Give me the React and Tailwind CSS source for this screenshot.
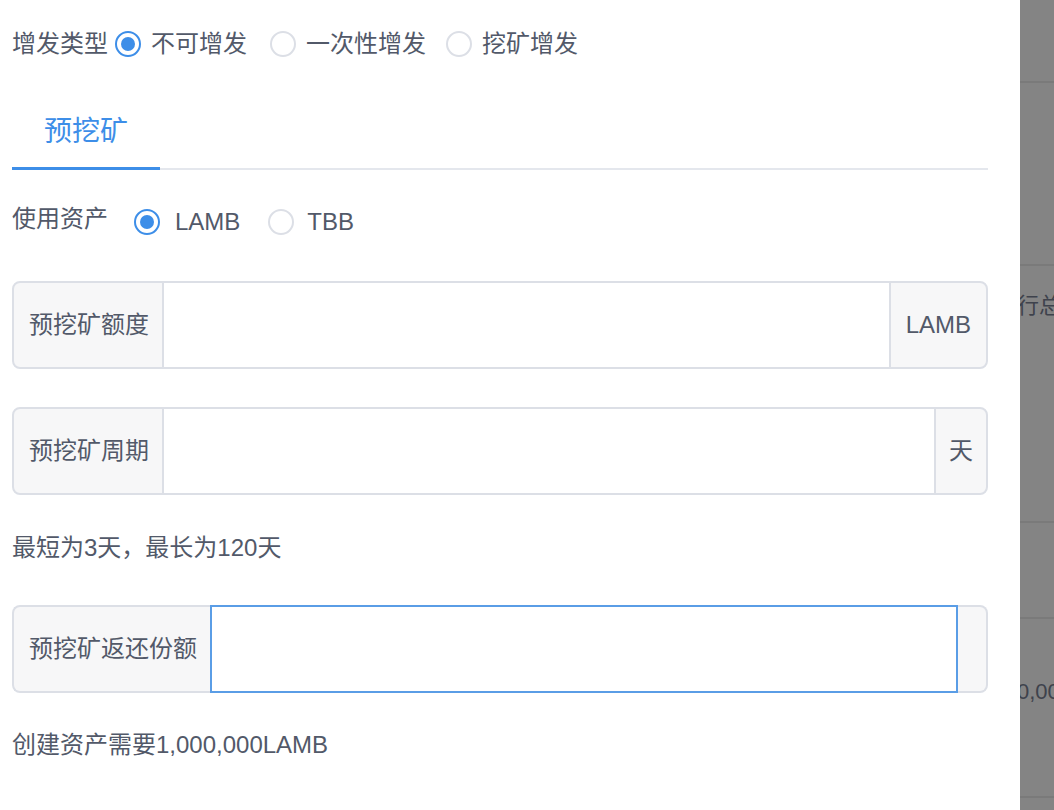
import { useState } from "react";

const font = {
  fontFamily: '"Liberation Sans", "Noto Sans CJK SC", sans-serif',
};

const Radio = ({ checked, label, onClick, className = "" }) => (
  <label
    onClick={onClick}
    className={`flex items-center cursor-pointer ${className}`}
  >
    <span
      className={`w-[26px] h-[26px] rounded-full border-2 flex items-center justify-center shrink-0 ${
        checked ? "border-[#3d8ee8]" : "border-[#dcdfe6]"
      }`}
    >
      {checked && <span className="w-[14px] h-[14px] rounded-full bg-[#3d8ee8]" />}
    </span>
    <span className="ml-[10px]">{label}</span>
  </label>
);

const InputGroup = ({ label, append, focused, appendWidth }) => (
  <div className="flex h-[88px]">
    <div
      className={`flex items-center bg-[#f7f7f8] border-2 border-[#dcdfe6] rounded-l-[8px] pl-[15px] pr-[13px] whitespace-nowrap ${
        focused ? "border-r-0" : ""
      }`}
    >
      {label}
    </div>
    <input
      className={`flex-1 min-w-0 outline-none bg-white ${
        focused ? "border-2 border-[#5a9de6]" : "border-y-2 border-[#dcdfe6]"
      }`}
    />
    <div
      className={`flex items-center justify-center bg-[#f7f7f8] border-2 border-[#dcdfe6] rounded-r-[8px] ${
        appendWidth ? appendWidth : "px-[15px]"
      } ${focused ? "border-l-0" : ""}`}
    >
      {append}
    </div>
  </div>
);

const App = () => {
  const [issueType, setIssueType] = useState(0);
  const [asset, setAsset] = useState("LAMB");

  return (
    <div className="flex h-[810px] w-full overflow-hidden bg-white" style={font}>
      <div className="w-[1020px] shrink-0 pl-[12px] pr-[32px] text-[24px] leading-none text-[#525969]">
        <div className="mt-[24px] h-[40px] flex items-center">
          <span className="mr-[7px]">增发类型</span>
          <Radio checked={issueType === 0} label="不可增发" onClick={() => setIssueType(0)} />
          <Radio
            checked={issueType === 1}
            label="一次性增发"
            onClick={() => setIssueType(1)}
            className="ml-[23px]"
          />
          <Radio
            checked={issueType === 2}
            label="挖矿增发"
            onClick={() => setIssueType(2)}
            className="ml-[20px]"
          />
        </div>

        <div className="mt-[33px] h-[73px] flex border-b-2 border-[#e4e7ed]">
          <div className="w-[148px] h-[73px] -mb-[2px] flex items-center justify-center border-b-[3px] border-[#3d8ee8] text-[28px] text-[#3d8ee8]">
            预挖矿
          </div>
        </div>

        <div className="mt-[32px] h-[40px] flex items-center">
          <span className="mr-[26px] pb-[6px]">使用资产</span>
          <Radio checked={asset === "LAMB"} label="LAMB" onClick={() => setAsset("LAMB")} className="[&>span:last-child]:ml-[15px]" />
          <Radio
            checked={asset === "TBB"}
            label="TBB"
            onClick={() => setAsset("TBB")}
            className="ml-[28px] [&>span:last-child]:ml-[13px]"
          />
        </div>

        <div className="mt-[39px]">
          <InputGroup label="预挖矿额度" append="LAMB" />
        </div>
        <div className="mt-[38px]">
          <InputGroup label="预挖矿周期" append="天" appendWidth="px-[13px]" />
        </div>

        <p className="mt-[41px]">最短为3天，最长为120天</p>

        <div className="mt-[45px]">
          <InputGroup label="预挖矿返还份额" append="" focused appendWidth="w-[30px]" />
        </div>

        <p className="mt-[40px]">创建资产需要1,000,000LAMB</p>
      </div>

      {/* table behind the drawer mask */}
      <div className="flex-1 bg-[#848484] overflow-hidden text-[22px] leading-none text-[#3e424c]">
        <div className="h-[83px] border-b-2 border-[#7a7a7a]" />
        <div className="h-[183px] border-b-2 border-[#7a7a7a]" />
        <div className="h-[257px] border-b-2 border-[#7a7a7a] pt-[29px] -ml-[3px] whitespace-nowrap">
          行总
        </div>
        <div className="h-[96px] border-b-2 border-[#7a7a7a]" />
        <div className="h-[179px] border-b-2 border-[#7a7a7a] pt-[62px] -ml-[3px] whitespace-nowrap">
          0,00
        </div>
      </div>
    </div>
  );
};

export default App;
